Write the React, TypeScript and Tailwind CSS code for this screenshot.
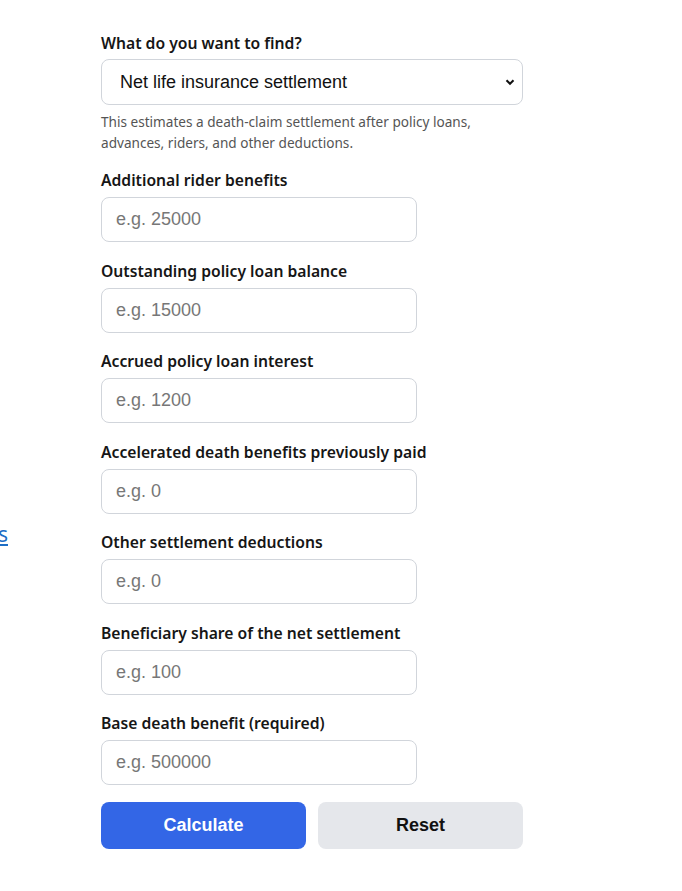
import { useState } from 'react';

const fields = [
  { id: 'riders', label: 'Additional rider benefits', placeholder: 'e.g. 25000' },
  { id: 'loan', label: 'Outstanding policy loan balance', placeholder: 'e.g. 15000' },
  { id: 'interest', label: 'Accrued policy loan interest', placeholder: 'e.g. 1200' },
  { id: 'accelerated', label: 'Accelerated death benefits previously paid', placeholder: 'e.g. 0' },
  { id: 'other', label: 'Other settlement deductions', placeholder: 'e.g. 0' },
  { id: 'share', label: 'Beneficiary share of the net settlement', placeholder: 'e.g. 100' },
  { id: 'base', label: 'Base death benefit (required)', placeholder: 'e.g. 500000' },
];

export default function App() {
  const [values, setValues] = useState<Record<string, string>>({});
  const [mode, setMode] = useState('net');

  return (
    <div className="flex min-h-screen bg-white font-['Noto_Sans',sans-serif]">
      {/* sidebar link, mostly scrolled off to the left */}
      <div className="flex w-[8px] shrink-0 justify-end overflow-hidden pt-[524px]">
        <a href="#" className="whitespace-nowrap text-[21px] leading-none text-[#1d6ec5] underline">
          Tools
        </a>
      </div>

      <form className="ml-[93px] w-[422px] pt-[32px]" onSubmit={(e) => e.preventDefault()}>
        <label className="mb-[5px] block text-[15.7px] font-semibold leading-[22px] text-[#161616]">
          What do you want to find?
        </label>
        <div className="relative">
          <select
            value={mode}
            onChange={(e) => setMode(e.target.value)}
            className="h-[46px] w-full appearance-none rounded-lg border border-[#d1d5db] bg-white pl-[18px] font-['Liberation_Sans',sans-serif] text-[18px] text-[#111]"
          >
            <option value="net">Net life insurance settlement</option>
          </select>
          <svg
            className="pointer-events-none absolute right-[8px] top-[18px] h-[10px] w-[10px]"
            viewBox="0 0 10 10"
            fill="none"
            stroke="#111"
            strokeWidth="2"
          >
            <path d="M1.5 3.2 5 6.8 8.5 3.2" />
          </svg>
        </div>
        <p className="mt-[6px] w-[384px] text-[13.6px] leading-[21px] text-[#555]">
          This estimates a death-claim settlement after policy loans, advances, riders, and other deductions.
        </p>

        {fields.map((f, i) => (
          <div key={f.id} className={i === 0 ? 'mt-[16px]' : 'mt-[17.5px]'}>
            <label htmlFor={f.id} className="mb-[6px] block text-[15.7px] font-semibold leading-[22px] text-[#161616]">
              {f.label}
            </label>
            <input
              id={f.id}
              type="text"
              placeholder={f.placeholder}
              value={values[f.id] ?? ''}
              onChange={(e) => setValues({ ...values, [f.id]: e.target.value })}
              className="h-[45px] w-[316px] rounded-lg border border-[#d1d5db] px-[14px] font-['Liberation_Sans',sans-serif] text-[18px] text-[#111] placeholder:text-[#777]"
            />
          </div>
        ))}

        <div className="mt-[17px] flex gap-[12px]">
          <button
            type="submit"
            className="h-[47px] flex-1 rounded-lg bg-[#3366e6] font-['Liberation_Sans',sans-serif] text-[18px] font-bold text-white"
          >
            Calculate
          </button>
          <button
            type="button"
            onClick={() => setValues({})}
            className="h-[47px] flex-1 rounded-lg bg-[#e5e7eb] font-['Liberation_Sans',sans-serif] text-[18px] font-bold text-[#111]"
          >
            Reset
          </button>
        </div>
      </form>
    </div>
  );
}
